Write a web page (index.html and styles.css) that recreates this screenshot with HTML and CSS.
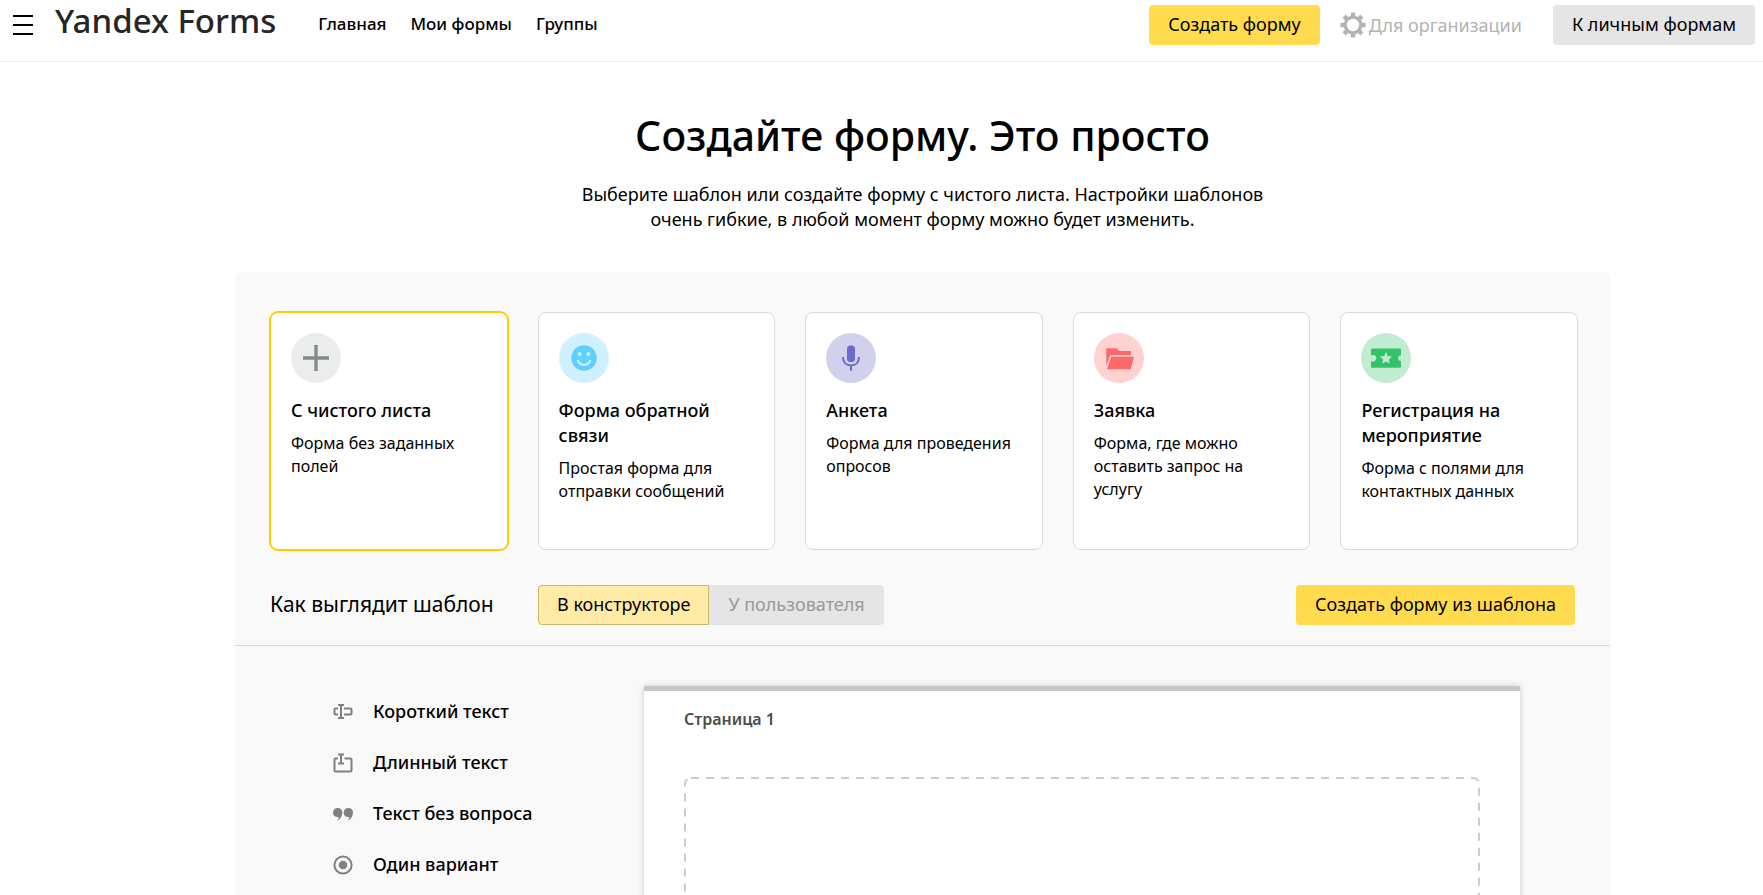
FILE: index.html
```html
<!DOCTYPE html>
<html lang="ru">
<head>
<meta charset="utf-8">
<meta name="viewport" content="width=device-width, initial-scale=1">
<title>Yandex Forms</title>
<link rel="stylesheet" href="styles.css">
</head>
<body>
<header class="header">
  <button class="burger" type="button" aria-label="Меню">
    <svg width="20" height="20" viewBox="0 0 20 20"><path d="M0 1h20M0 10h20M0 19h20" stroke="#000" stroke-width="2"/></svg>
  </button>
  <a class="logo" href="#">Yandex Forms</a>
  <nav class="nav">
    <a href="#">Главная</a>
    <a href="#">Мои формы</a>
    <a href="#">Группы</a>
  </nav>
  <div class="actions">
    <button class="btn btn-primary" type="button">Создать форму</button>
    <a class="org" href="#">
      <svg width="26" height="26" viewBox="-13 -13 26 26" fill="none" stroke="#b3b3b3">
        <circle r="7.8" stroke-width="3.2"/>
        <path stroke-width="4.4" d="M0-12.6V-8.5M0 12.6V8.5M-12.6 0H-8.5M12.6 0H8.5M-8.9-8.9-6-6M8.9 8.9 6 6M-8.9 8.9-6 6M8.9-8.9 6-6"/>
      </svg>
      <span>Для организации</span>
    </a>
    <button class="btn btn-gray" type="button">К личным формам</button>
  </div>
</header>

<main class="main">
  <h1 class="title">Создайте форму. Это просто</h1>
  <p class="lead">Выберите шаблон или создайте форму с чистого листа. Настройки шаблонов очень гибкие, в любой момент форму можно будет изменить.</p>

  <section class="panel">
    <div class="cards">
      <button class="card card-selected" type="button" aria-pressed="true">
        <svg class="card-icon" viewBox="0 0 50 50"><circle cx="25" cy="25" r="25" fill="#ebedec"/><path d="M25 12v26M12 25h26" stroke="#87888a" stroke-width="3.4"/></svg>
        <span class="card-title">С чистого листа</span>
        <span class="card-text">Форма без заданных полей</span>
      </button>
      <button class="card" type="button" aria-pressed="false">
        <svg class="card-icon" viewBox="0 0 50 50"><circle cx="25" cy="25" r="25" fill="#cff1ff"/><circle cx="25" cy="25" r="12.7" fill="#5fcffb"/><circle cx="20.7" cy="21" r="2" fill="#cff1ff"/><circle cx="29.3" cy="21" r="2" fill="#cff1ff"/><path d="M18.6 26.8q1.900 5 6.400 5t6.400-5" fill="none" stroke="#cff1ff" stroke-width="2.200"/></svg>
        <span class="card-title">Форма обратной связи</span>
        <span class="card-text">Простая форма для отправки сообщений</span>
      </button>
      <button class="card" type="button" aria-pressed="false">
        <svg class="card-icon" viewBox="0 0 50 50"><circle cx="25" cy="25" r="25" fill="#d2d1ed"/><rect x="21" y="12.500" width="8" height="16.500" rx="3.500" fill="#6b69c9"/><path d="M17 24c0 5.500 3.500 8.500 8 8.500s8-3 8-8.500M25 32v5.700" fill="none" stroke="#6b69c9" stroke-width="2"/></svg>
        <span class="card-title">Анкета</span>
        <span class="card-text">Форма для проведения опросов</span>
      </button>
      <button class="card" type="button" aria-pressed="false">
        <svg class="card-icon" viewBox="0 0 50 50"><circle cx="25" cy="25" r="25" fill="#ffd1d1"/><path d="M12.300 15.200h10.200l2.700 2.900h11.800v4H16.200l-3.900 11zM17.200 23.800H40l-3.200 12.500H13z" fill="#ff6868"/></svg>
        <span class="card-title">Заявка</span>
        <span class="card-text">Форма, где можно оставить запрос на услугу</span>
      </button>
      <button class="card" type="button" aria-pressed="false">
        <svg class="card-icon" viewBox="0 0 50 50"><circle cx="25" cy="25" r="25" fill="#c2ecd2"/><path d="M11 15.500h28a1 1 0 0 1 1 1v5.700a2.900 2.900 0 0 0 0 5.800v5.700a1 1 0 0 1-1 1H11a1 1 0 0 1-1-1V28a2.900 2.900 0 0 0 3.600-5.800H10v-5.700a1 1 0 0 1 1-1z" fill="#33c268"/><path d="M10 22a3 3 0 0 1 0 6zM25 19l1.700 4.100 4.400.4-3.300 2.900 1 4.400-3.800-2.400-3.800 2.400 1-4.400-3.300-2.900 4.400-.4z" fill="#c2ecd2"/></svg>
        <span class="card-title">Регистрация на мероприятие</span>
        <span class="card-text">Форма с полями для контактных данных</span>
      </button>
    </div>

    <div class="toolbar">
      <h2 class="toolbar-title">Как выглядит шаблон</h2>
      <div class="toggle" role="group" aria-label="Как выглядит шаблон">
        <button class="toggle-item toggle-on" type="button" aria-pressed="true">В конструкторе</button>
        <button class="toggle-item" type="button" aria-pressed="false">У пользователя</button>
      </div>
      <button class="btn btn-primary toolbar-cta" type="button">Создать форму из шаблона</button>
    </div>

    <div class="builder">
      <ul class="fields">
        <li class="field">
          <svg width="20" height="20" viewBox="0 0 20 20" fill="none" stroke="#808080" stroke-width="2"><path d="M5 6.500H2.500q-1 0-1 1v4q0 1 1 1H5M11 6.500h6.500q1 0 1 1v4q0 1-1 1H11M8 3v13M5 2.900h6M5 16.100h6"/></svg>
          Короткий текст
        </li>
        <li class="field">
          <svg width="20" height="20" viewBox="0 0 20 20" fill="none" stroke="#808080" stroke-width="2"><path d="M5 5.500H2.500q-1 0-1 1v11q0 1 1 1h15q1 0 1-1v-11q0-1-1-1H11.500M8 2v8M5 1.600h6M5 10.400h6"/></svg>
          Длинный текст
        </li>
        <li class="field">
          <svg width="20" height="20" viewBox="0 0 20 20" fill="#808080"><path d="M4.800 4C7.500 4 9.400 5.900 9.400 8.600c0 3.400-1.900 6.400-5.200 8.400 1-1.400 1.500-2.700 1.500-4C2.500 13.500 0 11.500 0 8.700 0 6 2 4 4.800 4zM15.400 4c2.700 0 4.600 1.900 4.600 4.600 0 3.400-1.900 6.400-5.200 8.400 1-1.400 1.500-2.700 1.500-4-3.200.5-5.700-1.500-5.700-4.300 0-2.700 2-4.700 4.800-4.700z"/></svg>
          Текст без вопроса
        </li>
        <li class="field">
          <svg width="20" height="20" viewBox="0 0 20 20"><circle cx="10" cy="10" r="8.600" fill="none" stroke="#808080" stroke-width="2"/><circle cx="10" cy="10" r="4.300" fill="#808080"/></svg>
          Один вариант
        </li>
      </ul>
      <div class="sheet">
        <h3 class="sheet-title">Страница 1</h3>
        <div class="dropzone">
          <svg width="100%" height="100%"><rect class="dropzone-line" x="1" y="1" width="100%" height="100%" rx="6"/></svg>
        </div>
      </div>
    </div>
  </section>
</main>
</body>
</html>
```
FILE: styles.css
```css
* {
  box-sizing: border-box;
}

html {
  scrollbar-width: none;
}

body {
  margin: 0;
  background: #fff;
  color: #000;
  font: 18px/25px "Noto Sans", "Open Sans", sans-serif;
}

button {
  border: 0;
  background: none;
  color: inherit;
  font: inherit;
  cursor: pointer;
}

a {
  color: inherit;
  text-decoration: none;
}

svg {
  display: block;
  flex: none;
}

.header {
  display: flex;
  align-items: flex-start;
  padding: 5px 8px 16px 13px;
  border-bottom: 1px solid #ededed;
}

.burger {
  padding: 10px 0;
  margin-right: 22px;
}

.logo {
  color: #262626;
  font-size: 33px;
  font-weight: 500;
  line-height: 32px;
}

.nav {
  display: flex;
  gap: 24px;
  margin-left: 42px;
  font-size: 17px;
  font-weight: 500;
  line-height: 38px;
}

.actions {
  display: flex;
  align-items: center;
  margin-left: auto;
}

.btn {
  height: 40px;
  padding: 0 19px 2px;
  border-radius: 4px;
  white-space: nowrap;
}

.btn-primary {
  background: #ffdb4d;
}

.btn-gray {
  background: #e5e5e5;
}

.org {
  display: flex;
  align-items: center;
  gap: 3px;
  margin: 0 31px 0 20px;
  color: #b3b3b3;
  white-space: nowrap;
}

.main {
  padding: 48px 0 0 82px;
}

.title {
  margin: 0;
  font-size: 41px;
  font-weight: 500;
  line-height: 50px;
  text-align: center;
}

.lead {
  max-width: 700px;
  margin: 22px auto 40px;
  text-align: center;
}

.panel {
  max-width: 1375px;
  margin: 0 auto;
  border-radius: 8px 8px 0 0;
  background: #f9f9f9;
}

.cards {
  display: grid;
  grid-template-columns: repeat(5, 1fr);
  gap: 30px;
  padding: 40px 32px 35px 35px;
}

.card {
  display: flex;
  flex-direction: column;
  align-items: flex-start;
  min-height: 238px;
  padding: 20px;
  border: 1px solid #d9d9e3;
  border-radius: 8px;
  background: #fff;
  text-align: left;
}

.card-selected {
  border-color: #fc0;
  box-shadow: 0 0 0 1px #fc0;
}

.card-icon {
  width: 50px;
  height: 50px;
}

.card-title {
  margin-top: 15px;
  font-weight: 500;
}

.card-text {
  margin-top: 9px;
  font-size: 16px;
  line-height: 23px;
}

.toolbar {
  display: flex;
  align-items: center;
  padding: 0 35px 20px;
  border-bottom: 1px solid #d9d9e3;
}

.toolbar-title {
  width: 268px;
  margin: 0;
  padding-bottom: 2px;
  font-size: 21px;
  font-weight: 400;
}

.toggle {
  display: flex;
}

.toggle-item {
  height: 40px;
  padding: 0 18px 2px;
  border: 1px solid #e5e5e5;
  border-radius: 0 4px 4px 0;
  background: #e5e5e5;
  color: #999;
}

.toggle-on {
  border-color: #ccb76b;
  border-radius: 4px 0 0 4px;
  background: #ffeba6;
  color: #000;
}

.toolbar-cta {
  margin-left: auto;
}

.builder {
  display: flex;
  gap: 40px;
  padding: 40px 90px 0 98px;
}

.fields {
  flex: 0 0 271px;
  margin: 0;
  padding: 0;
  list-style: none;
}

.field {
  display: flex;
  align-items: center;
  gap: 20px;
  font-weight: 500;
  line-height: 51px;
}

.sheet {
  flex: 1;
  padding: 16px 42px 40px 40px;
  border-top: 5px solid #c7c7c7;
  background: #fff;
  box-shadow: 0 0 6px rgba(0, 0, 0, 0.2);
}

.sheet-title {
  margin: 0;
  color: #4d4d4d;
  font-size: 16px;
  font-weight: 600;
}

.dropzone {
  height: 200px;
  margin-top: 45px;
}

.dropzone svg {
  overflow: visible;
}

.dropzone-line {
  fill: none;
  stroke: #ccc;
  stroke-width: 2px;
  stroke-dasharray: 8 7;
}
```
